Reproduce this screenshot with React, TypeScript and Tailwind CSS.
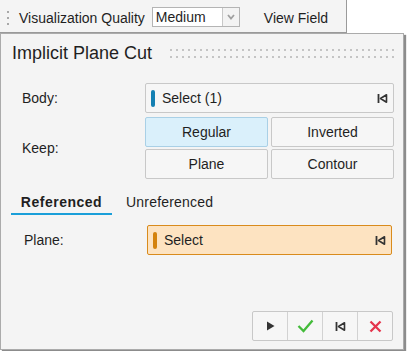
import React from "react";

const PickIcon = ({ color = "#333" }: { color?: string }) => (
  <svg width="11" height="11" viewBox="0 0 11 11">
    <line x1="1.5" y1="1" x2="1.5" y2="10" stroke={color} strokeWidth="1.8" />
    <path d="M9.5 1.8 L3.5 5.5 L9.5 9.2 Z" fill="none" stroke={color} strokeWidth="1.6" strokeLinejoin="round" />
  </svg>
);

const Dots = () => (
  <svg className="w-full h-[9px] block">
    <defs>
      <pattern id="dp" x="0" y="0" width="6" height="7" patternUnits="userSpaceOnUse">
        <rect x="0" y="0" width="2" height="2" fill="#c4c4c4" />
      </pattern>
    </defs>
    <rect x="0" y="0" width="100%" height="9" fill="url(#dp)" />
  </svg>
);

export default function App() {
  return (
    <div className="w-[407px] h-[351px] bg-white font-['Liberation_Sans',Arial,sans-serif] text-[#1f1f1f] flex flex-col">
      {/* toolbar */}
      <div className="w-[347px] h-[33px] shrink-0 bg-[#f4f4f4] border-r border-b border-[#9a9a9a] flex items-center pl-[7px] text-[14px]">
        <div className="flex flex-col gap-[4px] mt-[3px]">
          <div className="w-[2px] h-[2px] bg-[#a8a8a8]" />
          <div className="w-[2px] h-[2px] bg-[#a8a8a8]" />
          <div className="w-[2px] h-[2px] bg-[#a8a8a8]" />
        </div>
        <span className="ml-[10px] mt-[3px] leading-[16px]">Visualization Quality</span>
        <div className="ml-[7px] mt-[1px] h-[20px] w-[88px] flex border border-[#b4b4b4] bg-white">
          <span className="flex-1 pl-[3px] leading-[18px] text-[14px]">Medium</span>
          <div className="w-[17px] border-l border-[#c8c8c8] bg-[#f3f3f3] flex items-center justify-center">
            <svg width="8" height="6" viewBox="0 0 8 6">
              <path d="M1 1 L4 4.5 L7 1" fill="none" stroke="#a0a0a0" strokeWidth="1.8" />
            </svg>
          </div>
        </div>
        <span className="ml-[24px] mt-[3px] leading-[16px]">View Field</span>
      </div>

      {/* panel */}
      <div className="w-[404px] h-[317px] shrink-0 bg-[#f4f4f4] border border-[#ababab] shadow-[2px_2px_1px_rgba(0,0,0,0.45)] flex flex-col">
        {/* title */}
        <div className="mt-[8px] h-[22px] flex items-center pl-[11px] pr-[8px]">
          <span className="text-[18px] leading-[22px] whitespace-nowrap">Implicit Plane Cut</span>
          <div className="flex-1 ml-[18px] mt-[1px]">
            <Dots />
          </div>
        </div>

        {/* body */}
        <div className="mt-[19px] flex items-center pl-[21px]">
          <span className="w-[123px] text-[14px]">Body:</span>
          <div className="w-[249px] h-[30px] border border-[#c8c8c8] rounded-[2px] bg-[#f6f6f6] flex items-center pl-[5px] pr-[5px]">
            <div className="w-[4px] h-[17px] rounded-[2px] bg-[#1580b2]" />
            <span className="ml-[7px] text-[14px] flex-1">Select (1)</span>
            <PickIcon />
          </div>
        </div>

        {/* keep */}
        <div className="mt-[4px] flex items-center pl-[21px]">
          <span className="w-[123px] text-[14px]">Keep:</span>
          <div className="w-[249px] grid grid-cols-2 gap-x-[3px] gap-y-[2px] text-[14px]">
            <div className="h-[30px] border border-[#a9d0e6] bg-[#daf0fb] rounded-[2px] flex items-center justify-center">Regular</div>
            <div className="h-[30px] border border-[#c8c8c8] bg-[#f6f6f6] rounded-[2px] flex items-center justify-center">Inverted</div>
            <div className="h-[30px] border border-[#c8c8c8] bg-[#f6f6f6] rounded-[2px] flex items-center justify-center">Plane</div>
            <div className="h-[30px] border border-[#c8c8c8] bg-[#f6f6f6] rounded-[2px] flex items-center justify-center">Contour</div>
          </div>
        </div>

        {/* tabs */}
        <div className="mt-[13px] flex pl-[10px] text-[14px]">
          <div className="w-[101px] flex justify-center border-b-2 border-[#1a9fd9] pb-[1px]">
            <span className="font-bold leading-[20px] tracking-[0.5px]">Referenced</span>
          </div>
          <div className="ml-[14px] leading-[20px] tracking-[0.2px]">Unreferenced</div>
        </div>

        {/* plane */}
        <div className="mt-[10px] flex items-center pl-[23px]">
          <span className="w-[123px] text-[14px]">Plane:</span>
          <div className="w-[245px] h-[30px] border border-[#d98b1c] rounded-[2px] bg-[#fde3c1] flex items-center pl-[5px] pr-[5px]">
            <div className="w-[4px] h-[17px] rounded-[2px] bg-[#d4820c]" />
            <span className="ml-[7px] text-[14px] flex-1">Select</span>
            <PickIcon />
          </div>
        </div>

        {/* bottom buttons */}
        <div className="mt-[56px] flex justify-end pr-[10px]">
          <div className="flex h-[30px] border border-[#c8c8c8] rounded-[2px] bg-[#f6f6f6]">
            <div className="w-[35px] flex items-center justify-center border-r border-[#d2d2d2]">
              <svg width="9" height="10" viewBox="0 0 9 10">
                <path d="M1 0.5 L8.5 5 L1 9.5 Z" fill="#333" />
              </svg>
            </div>
            <div className="w-[35px] flex items-center justify-center border-r border-[#d2d2d2]">
              <svg width="17" height="14" viewBox="0 0 17 14">
                <path d="M1.5 7 L6.5 12 L15.5 1.5" fill="none" stroke="#43bb3a" strokeWidth="2.3" />
              </svg>
            </div>
            <div className="w-[35px] flex items-center justify-center border-r border-[#d2d2d2]">
              <PickIcon />
            </div>
            <div className="w-[34px] flex items-center justify-center">
              <svg width="13" height="13" viewBox="0 0 13 13">
                <path d="M1.5 1.5 L11.5 11.5 M11.5 1.5 L1.5 11.5" stroke="#e5344c" strokeWidth="2.3" />
              </svg>
            </div>
          </div>
        </div>
      </div>
    </div>
  );
}
